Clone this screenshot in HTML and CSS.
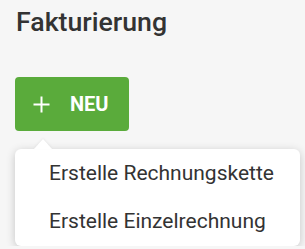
FILE: index.html
```html
<!DOCTYPE html>
<html>
<head>
<meta charset="utf-8">
<link rel="stylesheet" href="styles.css">
</head>
<body>
<div class="page">
  <h1 class="title">Fakturierung</h1>
  <div class="actions">
    <button class="btn-new">
      <svg class="plus" width="17" height="17" viewBox="0 0 17 17"><path d="M8.5 0.5v16M0.5 8.5h16" stroke="#fff" stroke-width="2" fill="none"/></svg>
      <span>NEU</span>
    </button>
    <div class="menu">
      <div class="menu-item">Erstelle Rechnungskette</div>
      <div class="menu-item">Erstelle Einzelrechnung</div>
    </div>
  </div>
</div>
</body>
</html>
```
FILE: styles.css
```css
html, body {
  margin: 0;
  padding: 0;
  background: #f6f6f6;
  font-family: Roboto, "Liberation Sans", sans-serif;
}
.page {
  padding: 6px 5px 0 15px;
}
.title {
  margin: 0;
  font-size: 26.7px;
  font-weight: 500;
  color: #333;
  line-height: 32px;
  padding-left: 1px;
}
.actions {
  margin-top: 39px;
}
.btn-new {
  display: flex;
  align-items: center;
  gap: 20px;
  width: 114px;
  height: 54px;
  padding: 0 0 0 18px;
  border: none;
  border-radius: 4px;
  background: #5aab3b;
  color: #fff;
  font-family: Roboto, "Liberation Sans", sans-serif;
  font-size: 20px;
  font-weight: 700;
}
.menu {
  position: relative;
  margin-top: 18px;
  width: 285px;
  background: #fff;
  border-radius: 6px;
  box-shadow: 0 2px 10px rgba(0,0,0,0.2);
  padding: 0 0 1px;
}
.menu::before {
  content: "";
  position: absolute;
  top: -10px;
  left: 19px;
  width: 0;
  height: 0;
  border-left: 9px solid transparent;
  border-right: 9px solid transparent;
  border-bottom: 10px solid #fff;
  filter: drop-shadow(0 -1px 1px rgba(0,0,0,0.06));
}
.menu-item {
  height: 48px;
  line-height: 48px;
  padding-left: 34px;
  font-size: 21px;
  color: #333;
}
```
